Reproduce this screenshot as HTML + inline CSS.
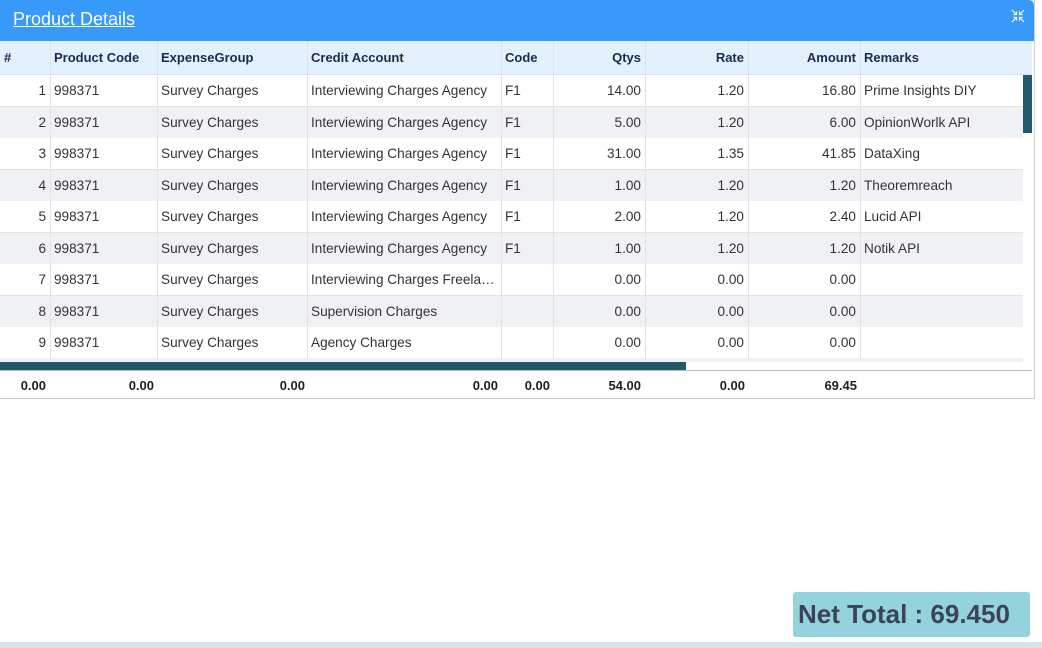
<!DOCTYPE html>
<html><head><meta charset="utf-8"><style>
*{margin:0;padding:0;box-sizing:border-box}
body{width:1042px;height:648px;background:#fff;font-family:"Liberation Sans",sans-serif;position:relative;overflow:hidden;color:#333}
.hdr{position:absolute;left:0;top:0;width:1034px;height:41px;background:#3799f9;border-top-right-radius:5px}
.hdr a{position:absolute;left:13px;top:9px;font-size:18px;color:#fff;text-decoration:underline}
.panel{position:absolute;left:0;top:0;width:1035px;height:399px;border-right:1px solid #ccc;border-bottom:1px solid #ccc}
.th{position:absolute;top:41px;left:0;width:1032px;height:34px;background:#e3f0fd;border-bottom:1px solid #dde}
.c{position:absolute;font-size:13.6px;line-height:31px;white-space:nowrap;overflow:hidden;padding:0 4px}
.th .c{font-weight:bold;color:#1b2a55;line-height:33px;font-size:13px}
.row{position:absolute;left:0;width:1023px;height:32px;border-bottom:1px solid #e2e2e2}
.row .c{color:#333}
.v{position:absolute;top:41px;height:318px;width:1px;background:#e2e2e2}
.r{text-align:right}
.ft .c{font-weight:bold;font-size:13px;color:#222;line-height:29px;top:371px}
</style></head><body>
<div class="panel"></div>
<div class="hdr"><a>Product Details</a>
<svg style="position:absolute;left:1011px;top:9px" width="14" height="14" viewBox="0 0 14 14" stroke="#fff" stroke-width="1.2" fill="none"><path d="M1 1L5.5 5.5M5.5 2.5V5.5H2.5M13 1L8.5 5.5M8.5 2.5V5.5H11.5M1 13L5.5 8.5M5.5 11.5V8.5H2.5M13 13L8.5 8.5M8.5 11.5V8.5H11.5"/></svg>
</div>
<div class="th">
<div class="c" style="left:0;width:50px">#</div>
<div class="c" style="left:50px;width:107px">Product Code</div>
<div class="c" style="left:157px;width:150px">ExpenseGroup</div>
<div class="c" style="left:307px;width:194px">Credit Account</div>
<div class="c" style="left:501px;width:52px">Code</div>
<div class="c r" style="left:553px;width:92px">Qtys</div>
<div class="c r" style="left:645px;width:103px">Rate</div>
<div class="c r" style="left:748px;width:112px">Amount</div>
<div class="c" style="left:860px;width:163px">Remarks</div>
</div>
<div id="rows"></div>
<script>
var d=[[1,"Interviewing Charges Agency","F1","14.00","1.20","16.80","Prime Insights DIY"],
[2,"Interviewing Charges Agency","F1","5.00","1.20","6.00","OpinionWorlk API"],
[3,"Interviewing Charges Agency","F1","31.00","1.35","41.85","DataXing"],
[4,"Interviewing Charges Agency","F1","1.00","1.20","1.20","Theoremreach"],
[5,"Interviewing Charges Agency","F1","2.00","1.20","2.40","Lucid API"],
[6,"Interviewing Charges Agency","F1","1.00","1.20","1.20","Notik API"],
[7,"Interviewing Charges Freela…","","0.00","0.00","0.00",""],
[8,"Supervision Charges","","0.00","0.00","0.00",""],
[9,"Agency Charges","","0.00","0.00","0.00",""]];
var h="";
d.forEach(function(r,i){var t=75+i*31.5;
h+='<div class="row" style="top:'+t+'px;background:'+(i%2?'#f0f1f5':'#fff')+'">'+
'<div class="c r" style="left:0;width:50px">'+r[0]+'</div>'+
'<div class="c" style="left:50px;width:107px">998371</div>'+
'<div class="c" style="left:157px;width:150px">Survey Charges</div>'+
'<div class="c" style="left:307px;width:194px">'+r[1]+'</div>'+
'<div class="c" style="left:501px;width:52px">'+r[2]+'</div>'+
'<div class="c r" style="left:553px;width:92px">'+r[3]+'</div>'+
'<div class="c r" style="left:645px;width:103px">'+r[4]+'</div>'+
'<div class="c r" style="left:748px;width:112px">'+r[5]+'</div>'+
'<div class="c" style="left:860px;width:163px">'+r[6]+'</div></div>';});
h+='<div class="row" style="top:358px;height:4px;background:#f0f1f5;border:0"></div>';
[50,157,307,501,553,645,748,860].forEach(function(x){h+='<div class="v" style="left:'+x+'px"></div>';});
document.getElementById("rows").innerHTML=h;
</script>
<div style="position:absolute;left:1023px;top:75px;width:9px;height:58px;background:#215b6a"></div>
<div style="position:absolute;left:0;top:362px;width:686px;height:8px;background:#215b6a"></div>
<div style="position:absolute;left:0;top:370px;width:1032px;height:1px;background:#bbb"></div>
<div class="ft">
<div class="c r" style="left:0;width:50px">0.00</div>
<div class="c r" style="left:50px;width:108px">0.00</div>
<div class="c r" style="left:157px;width:152px">0.00</div>
<div class="c r" style="left:307px;width:195px">0.00</div>
<div class="c r" style="left:501px;width:53px">0.00</div>
<div class="c r" style="left:553px;width:92px">54.00</div>
<div class="c r" style="left:645px;width:104px">0.00</div>
<div class="c r" style="left:748px;width:113px">69.45</div>
</div>
<div style="position:absolute;left:793px;top:592px;width:237px;height:45px;background:#95d3dc;border-radius:3px;color:#3b4356;font-size:26px;font-weight:bold;line-height:45px;padding-left:5px;white-space:nowrap">Net Total : 69.450</div>
<div style="position:absolute;left:0;top:642px;width:1042px;height:6px;background:#dae0eb"></div>
</body></html>
